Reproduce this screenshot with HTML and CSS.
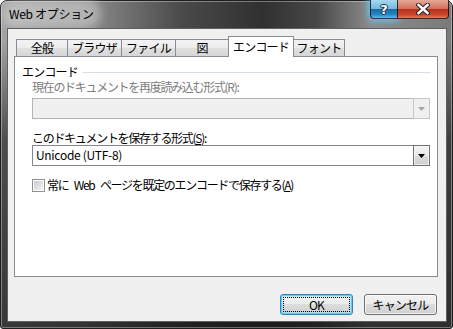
FILE: index.html
```html
<!DOCTYPE html>
<html lang="ja">
<head>
    <meta charset="UTF-8">
    <title>Web オプション</title>
    <link rel="stylesheet" href="styles.css">
</head>
<body>
    <div class="window">
        <div class="titlebar">
            <span class="title">Web オプション</span>
            <div class="caption-buttons">
                <span class="cap-btn cap-help">?</span>
                <span class="cap-btn cap-close">
                    <svg width="14" height="12" viewBox="0 0 14 12">
                        <path d="M2.5 2 L11.5 10 M11.5 2 L2.5 10" stroke="#2a2a2a" stroke-width="4.6" stroke-linecap="square"/>
                        <path d="M2.5 2 L11.5 10 M11.5 2 L2.5 10" stroke="#fff" stroke-width="2.4" stroke-linecap="square"/>
                    </svg>
                </span>
            </div>
        </div>

        <div class="client">
            <div class="tabs">
                <div class="tab">全般</div>
                <div class="tab">ブラウザ</div>
                <div class="tab">ファイル</div>
                <div class="tab">図</div>
                <div class="tab active">エンコード</div>
                <div class="tab">フォント</div>
            </div>

            <div class="panel">
                <div class="group-title"><span>エンコード</span><span class="group-line"></span></div>

                <div class="group-body">
                    <div class="field-label disabled">現在のドキュメントを再度読み込む形式(R):</div>
                    <div class="combo disabled">
                        <span class="combo-value"></span>
                        <span class="combo-arrow">
                            <svg width="7" height="4" viewBox="0 0 7 4"><path d="M0 0 H7 L3.5 4 Z" fill="#a7a7a7"/></svg>
                        </span>
                    </div>

                    <div class="field-label spaced">このドキュメントを保存する形式(<u>S</u>):</div>
                    <div class="combo">
                        <span class="combo-value">Unicode (UTF-8)</span>
                        <span class="combo-arrow">
                            <svg width="7" height="4" viewBox="0 0 7 4"><path d="M0 0 H7 L3.5 4 Z" fill="#000"/></svg>
                        </span>
                    </div>

                    <label class="check-row">
                        <span class="checkbox"></span>
                        <span>常に Web ページを既定のエンコードで保存する(<u>A</u>)</span>
                    </label>
                </div>
            </div>

            <div class="footer">
                <button class="btn btn-default">OK</button>
                <button class="btn btn-cancel">キャンセル</button>
            </div>
        </div>
    </div>
</body>
</html>
```

FILE: styles.css
```css
* {
    box-sizing: border-box;
}
html, body {
    margin: 0;
    padding: 0;
}
body {
    width: 453px;
    height: 329px;
    overflow: hidden;
    background: #fff;
    font-family: "Noto Sans CJK JP", sans-serif;
    font-size: 12px;
    color: #000;
}
.window {
    width: 453px;
    height: 329px;
    display: flex;
    flex-direction: column;
    border: 1px solid #1e1e1e;
    border-radius: 7px 7px 3px 3px;
    background:
        linear-gradient(180deg, rgba(0,0,0,0) 0, rgba(0,0,0,0) 40px, rgba(20,20,20,0.6) 140px, rgba(20,20,20,0.75) 100%),
        linear-gradient(90deg, #a3a3a3 0, #8f8f8f 18%, #4a4a4a 40%, #303030 58%, #484848 70%, #8c8c8c 82%, #7a7a7a 100%);
    box-shadow: inset 0 0 0 1px rgba(255,255,255,0.35);
}

/* title bar */
.titlebar {
    height: 27px;
    display: flex;
    align-items: flex-start;
    padding-left: 8px;
}
.title {
    margin-top: 5px;
    line-height: 16px;
    letter-spacing: -0.3px;
    background: rgba(215,215,215,0.5);
    box-shadow: 0 0 9px 7px rgba(215,215,215,0.5);
    border-radius: 10px;
}
.caption-buttons {
    display: flex;
    margin-left: auto;
    margin-right: 3px;
    margin-top: -1px;
}
.cap-btn {
    height: 19px;
    display: flex;
    align-items: center;
    justify-content: center;
    border: 1px solid rgba(0,0,0,0.75);
    border-top: none;
}
.cap-help {
    width: 27px;
    border-right: none;
    border-radius: 0 0 0 4px;
    background: linear-gradient(180deg, #a9d7ef 0, #74b9df 48%, #1c6ba2 52%, #2286c4 80%, #46c6f0 100%);
    box-shadow: 0 0 6px 2px rgba(90,210,255,0.85);
    color: #fff;
    font-family: "DejaVu Sans", sans-serif;
    font-weight: bold;
    font-size: 13px;
    text-shadow: 0 0 1px #123, 1px 0 0 #234, -1px 0 0 #234, 0 1px 0 #234, 0 -1px 0 #234;
}
.cap-close {
    width: 52px;
    border-radius: 0 0 4px 0;
    background: linear-gradient(180deg, #e6a999 0, #d2705b 48%, #b8321b 52%, #c9452c 80%, #e0775c 100%);
}

/* client area */
.client {
    flex: 1;
    margin: 0 5px 6px 6px;
    border: 1px solid rgba(0,0,0,0.6);
    background: #f0f0f0;
    display: flex;
    flex-direction: column;
    padding: 7px 8px 6px 6px;
}

/* tabs */
.tabs {
    display: grid;
    grid-template-columns: 52px 54px 54px 53px 65px 51px;
    align-items: start;
    height: 20px;
    margin-left: 2px;
}
.tab {
    margin-top: 3px;
    margin-left: -1px;
    height: 17px;
    border: 1px solid #898c95;
    border-bottom: none;
    background: linear-gradient(180deg, #f3f3f3 0, #ececec 50%, #e1e1e1 50%, #d6d6d6 100%);
    text-align: center;
    line-height: 15px;
    white-space: nowrap;
    letter-spacing: -0.8px;
}
.tab:first-child {
    margin-left: 0;
}
.tab.active {
    margin-top: 0;
    height: 21px;
    line-height: 19px;
    background: #fff;
    position: relative;
    z-index: 1;
}

/* panel */
.panel {
    height: 221px;
    border: 1px solid #898c95;
    background: #fff;
    padding: 8px 7px 0 7px;
}
.group-title {
    display: flex;
    align-items: center;
    gap: 5px;
    margin-right: -1px;
    line-height: 14px;
    letter-spacing: -0.8px;
}
.group-line {
    flex: 1;
    height: 1px;
    background: #d5dfe5;
}
.group-body {
    padding-left: 10px;
}
.field-label {
    margin-top: 1px;
    line-height: 14px;
    letter-spacing: -1.3px;
}
.field-label.spaced {
    margin-top: 12px;
}
.field-label.disabled {
    color: #7d7d7d;
}
.combo {
    display: flex;
    align-items: center;
    height: 21px;
    margin-top: 4px;
    border: 1px solid #828790;
    background: #fff;
}
.field-label.spaced + .combo {
    margin-top: 0;
}
.combo.disabled {
    border-color: #b1b4b8;
    background: #f0f0f0;
}
.combo-value {
    flex: 1;
    padding-left: 3px;
    line-height: 14px;
    margin-top: -2px;
    letter-spacing: -0.3px;
}
.combo-arrow {
    align-self: stretch;
    width: 17px;
    margin: -1px -1px -1px 0;
    display: flex;
    align-items: center;
    justify-content: center;
    border: 1px solid #707070;
    background: linear-gradient(180deg, #f2f2f2 0, #ebebeb 50%, #dddddd 50%, #cfcfcf 100%);
    box-shadow: inset 0 0 0 1px rgba(255,255,255,0.6);
}
.combo.disabled .combo-arrow {
    border-color: #c4c6c9;
    background: #f0f0f0;
    box-shadow: none;
}
.check-row {
    display: flex;
    align-items: center;
    gap: 1px;
    margin-top: 12px;
    line-height: 14px;
    letter-spacing: -1.3px;
    word-spacing: 4px;
}
.checkbox {
    width: 13px;
    height: 13px;
    margin-right: 1px;
    border: 1px solid #8f8f8f;
    padding: 1px;
    background: linear-gradient(135deg, #c8cacd, #f4f4f4) content-box, #fff;
}

/* buttons */
.footer {
    display: flex;
    justify-content: flex-end;
    gap: 11px;
    padding-top: 17px;
}
.btn {
    width: 73px;
    height: 21px;
    padding: 0;
    border: 1px solid #707070;
    border-radius: 3px;
    background: linear-gradient(180deg, #f2f2f2 0, #ebebeb 50%, #dddddd 50%, #cfcfcf 100%);
    box-shadow: inset 0 0 0 1px rgba(255,255,255,0.7);
    font-family: inherit;
    font-size: 12px;
    color: #000;
    letter-spacing: -0.8px;
}
.btn-default {
    border-color: #3c7fb1;
    box-shadow: inset 0 0 0 1px #5ad0f6, inset 0 0 0 2px rgba(160,230,250,0.6);
    outline: 1px dotted #000;
    outline-offset: -4px;
}
.btn-cancel {
    margin-right: 1px;
}
```
